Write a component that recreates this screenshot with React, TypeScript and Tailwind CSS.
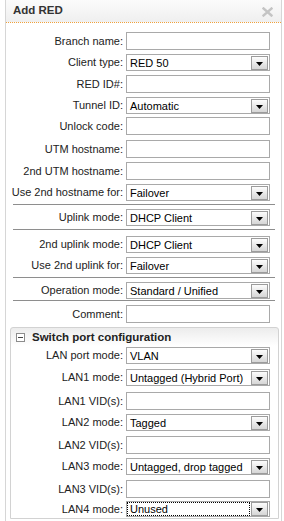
import React from "react";

type Row = {
  label: string;
  kind: "input" | "select";
  value?: string;
  mt: string;
  h?: string;
  focus?: boolean;
};

const mainRows: (Row | { sep: string })[] = [
  { label: "Branch name:", kind: "input", mt: "mt-[9px]" },
  { label: "Client type:", kind: "select", value: "RED 50", mt: "mt-[4px]" },
  { label: "RED ID#:", kind: "input", mt: "mt-[4px]" },
  { label: "Tunnel ID:", kind: "select", value: "Automatic", mt: "mt-[4px]" },
  { label: "Unlock code:", kind: "input", mt: "mt-[3px]" },
  { label: "UTM hostname:", kind: "input", mt: "mt-[5px]" },
  { label: "2nd UTM hostname:", kind: "input", mt: "mt-[4px]" },
  { label: "Use 2nd hostname for:", kind: "select", value: "Failover", mt: "mt-[4px]" },
  { sep: "mt-[3px]" },
  { label: "Uplink mode:", kind: "select", value: "DHCP Client", mt: "mt-[4px]" },
  { sep: "mt-[3px]" },
  { label: "2nd uplink mode:", kind: "select", value: "DHCP Client", mt: "mt-[6px]" },
  { label: "Use 2nd uplink for:", kind: "select", value: "Failover", mt: "mt-[4px]" },
  { sep: "mt-[3px]" },
  { label: "Operation mode:", kind: "select", value: "Standard / Unified", mt: "mt-[4px]" },
  { sep: "mt-[1px]" },
  { label: "Comment:", kind: "input", mt: "mt-[4px]" },
];

const switchRows: Row[] = [
  { label: "LAN port mode:", kind: "select", value: "VLAN", mt: "mt-0" },
  { label: "LAN1 mode:", kind: "select", value: "Untagged (Hybrid Port)", mt: "mt-[5px]" },
  { label: "LAN1 VID(s):", kind: "input", mt: "mt-[6px]" },
  { label: "LAN2 mode:", kind: "select", value: "Tagged", mt: "mt-[4px]" },
  { label: "LAN2 VID(s):", kind: "input", mt: "mt-[5px]" },
  { label: "LAN3 mode:", kind: "select", value: "Untagged, drop tagged", mt: "mt-[4px]" },
  { label: "LAN3 VID(s):", kind: "input", mt: "mt-[5px]" },
  { label: "LAN4 mode:", kind: "select", value: "Unused", mt: "mt-[3px]", h: "h-[16px]", focus: true },
];

function DropButton() {
  return (
    <div className="w-[17px] h-[14px] mr-px border border-[#9c9c9c] bg-gradient-to-b from-[#fdfdfd] to-[#d6d6d6] flex items-center justify-center">
      <svg width="7" height="4" viewBox="0 0 7 4" className="mt-[2px]">
        <path d="M0 0h7L3.5 4z" fill="#000" />
      </svg>
    </div>
  );
}

function Field({ row, labelW }: { row: Row; labelW: string }) {
  const h = row.h ?? (row.kind === "input" ? "h-[18px]" : "h-[17px]");
  return (
    <div className={`flex items-center ${h} ${row.mt}`}>
      <div className={`${labelW} text-right text-[#222] whitespace-nowrap`}>{row.label}</div>
      {row.kind === "input" ? (
        <div className="ml-[3px] w-[144px] h-full border border-[#a9a9a9] bg-white" />
      ) : (
        <div className="ml-[3px] w-[144px] h-full border border-[#a9a9a9] bg-white flex items-center">
          <div className="flex-1 pl-[1px] h-full flex items-center">
            <span
              className={`flex-1 pl-[2px] h-[12px] leading-[12px] text-black ${
                row.focus ? "outline outline-1 outline-dotted outline-black mr-[2px]" : ""
              }`}
            >
              {row.value}
            </span>
          </div>
          <DropButton />
        </div>
      )}
    </div>
  );
}

export default function App() {
  return (
    <div
      className="w-[284px] h-[521px] overflow-hidden bg-white text-[11px]"
      style={{ fontFamily: '"Liberation Sans", Arial, sans-serif' }}
    >
      <div className="ml-[5px] w-[277px] h-full border-x border-[#d6d6d6] bg-white">
        {/* title bar */}
        <div className="h-[23px] flex items-center justify-between pl-[7px] pr-[8px] bg-gradient-to-b from-[#fbfbfb] to-[#efefef] border-b border-dotted border-[#f0a23c]">
          <span className="font-bold text-[#333] text-[11.5px]">Add RED</span>
          <svg width="11" height="10" viewBox="0 0 11 10" className="mt-[1px]">
            <path d="M1.5 1.5l8 7M9.5 1.5l-8 7" stroke="#c4c4c4" strokeWidth="2.4" strokeLinecap="square" />
          </svg>
        </div>

        {/* form */}
        <div>
          {mainRows.map((r, i) =>
            "sep" in r ? (
              <div key={i} className={`${r.sep} ml-[7px] w-[262px] h-px bg-[#8e8e8e]`} />
            ) : (
              <Field key={i} row={r} labelW="w-[117px]" />
            )
          )}
        </div>

        {/* switch port box */}
        <div className="mt-[4px] ml-[4px] w-[269px] h-[192px] border border-[#d2d2d2] rounded-t-[3px] bg-gradient-to-b from-[#ececec] via-white via-[18px] to-white">
          <div className="h-[19px] flex items-center pl-[5px]">
            <div className="w-[9px] h-[9px] border border-[#8c8c8c] bg-white flex items-center justify-center">
              <div className="w-[5px] h-px bg-[#444]" />
            </div>
            <span className="ml-[7px] font-bold text-[11.5px] text-[#222]">Switch port configuration</span>
          </div>
          {switchRows.map((r, i) => (
            <Field key={i} row={r} labelW="w-[112px]" />
          ))}
        </div>
      </div>
    </div>
  );
}
